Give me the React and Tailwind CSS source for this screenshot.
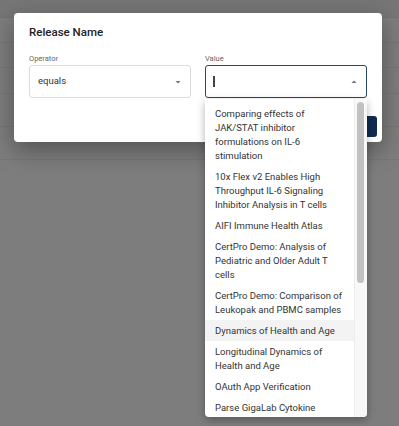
import React from "react";

const items = [
  "Comparing effects of JAK/STAT inhibitor formulations on IL-6 stimulation",
  "10x Flex v2 Enables High Throughput IL-6 Signaling Inhibitor Analysis in T cells",
  "AIFI Immune Health Atlas",
  "CertPro Demo: Analysis of Pediatric and Older Adult T cells",
  "CertPro Demo: Comparison of Leukopak and PBMC samples",
  "Dynamics of Health and Age",
  "Longitudinal Dynamics of Health and Age",
  "OAuth App Verification",
  "Parse GigaLab Cytokine",
];

function ArrowDown() {
  return (
    <svg width="12" height="12" viewBox="0 0 24 24" className="fill-[#757575]">
      <path d="M7 10l5 5 5-5z" />
    </svg>
  );
}

function ArrowUp() {
  return (
    <svg width="12" height="12" viewBox="0 0 24 24" className="fill-[#757575]">
      <path d="M7 14l5-5 5 5z" />
    </svg>
  );
}

export default function App() {
  return (
    <div className="relative w-[399px] h-[426px] overflow-hidden bg-[#7d7d7d] font-['Roboto','Liberation_Sans',sans-serif]">
      {/* page behind overlay */}
      <div className="flex flex-col">
        <div className="h-[18px] bg-[#767676] border-b border-[#727272]" />
        <div className="h-[25px] border-b border-[#767676]" />
        <div className="h-[25px] border-b border-[#767676]" />
        <div className="h-[26px] border-b border-[#767676]" />
        <div className="h-[33px] border-b border-[#767676]" />
        <div className="h-[33px] border-b border-[#767676]" />
      </div>

      {/* dialog */}
      <div className="absolute left-[14px] top-[13px] w-[368px] h-[129px] bg-white rounded-[4px] shadow-[0_8px_24px_rgba(0,0,0,0.35)] flex flex-col">
        <div className="px-[15px] pt-[11px]">
          <div className="text-[11.5px] leading-[16px] font-medium text-[#222]">Release Name</div>
          <div className="grid grid-cols-2 gap-[14px] mt-[13px]">
            <div className="flex flex-col">
              <div className="text-[7.5px] leading-[11px] text-[#666] mb-[1px]">Operator</div>
              <div className="h-[33px] border border-[#dcdcdc] rounded-[3px] flex items-center pl-[8px] pr-[6px]">
                <span className="flex-1 text-[9.5px] text-[#333]">equals</span>
                <ArrowDown />
              </div>
            </div>
            <div className="flex flex-col">
              <div className="text-[7.5px] leading-[11px] text-[#666] mb-[1px]">Value</div>
              <div className="h-[33px] border-[1.5px] border-[#2b4669] rounded-[3px] flex items-center pl-[7px] pr-[6px]">
                <span className="flex-1 flex items-center">
                  <span className="w-[1.5px] h-[11px] bg-[#444]" />
                </span>
                <ArrowUp />
              </div>
            </div>
          </div>
        </div>
        <div className="flex justify-end px-[5px] mt-[18px]">
          <button className="h-[21px] w-[60px] rounded-[3px] bg-[#0f2b50] text-white text-[9px]">Apply</button>
        </div>
      </div>

      {/* dropdown list */}
      <div className="absolute left-[205px] top-[99px] w-[162px] h-[318px] bg-white rounded-b-[4px] shadow-[0_3px_8px_rgba(0,0,0,0.3)] overflow-hidden flex">
        <div className="flex-1 pt-[4px] overflow-hidden">
          {items.map((t, i) => (
            <div
              key={i}
              className={
                "px-[10px] py-[3.5px] text-[9.5px] leading-[14px] text-[#333] " +
                (i === 5 ? "bg-[#f3f3f3]" : "")
              }
            >
              {t}
            </div>
          ))}
        </div>
        <div className="w-[13px] bg-[#f8f8f8] border-l border-[#ececec] pt-[3px] pl-[2px]">
          <div className="w-[7px] h-[181px] rounded-full bg-[#c1c1c1]" />
        </div>
      </div>
    </div>
  );
}
